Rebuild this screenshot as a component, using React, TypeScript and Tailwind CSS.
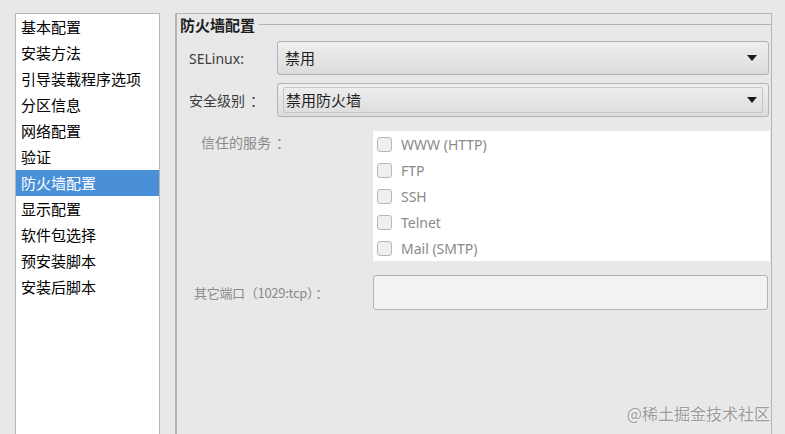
const navItems = [
  "基本配置",
  "安装方法",
  "引导装载程序选项",
  "分区信息",
  "网络配置",
  "验证",
  "防火墙配置",
  "显示配置",
  "软件包选择",
  "预安装脚本",
  "安装后脚本",
];

const services = ["WWW (HTTP)", "FTP", "SSH", "Telnet", "Mail (SMTP)"];

const cjk = "font-['Noto_Sans_CJK_SC','Noto_Sans',sans-serif]";
const latin = "font-['Noto_Sans','Noto_Sans_CJK_SC',sans-serif]";

function Arrow() {
  return (
    <svg width="10" height="6" viewBox="0 0 10 6" className="shrink-0">
      <path d="M0 0 H10 L5 6 Z" fill="#1a1a1a" />
    </svg>
  );
}

export default function App() {
  return (
    <div className={`relative w-[785px] h-[434px] overflow-hidden bg-[#e8e8e8] flex pt-[13px] ${cjk}`}>
      {/* sidebar */}
      <div className="ml-[15px] w-[145px] h-[440px] bg-white border border-[#b6b6b6]">
        {navItems.map((item) => (
          <div
            key={item}
            className={`h-[26px] flex items-center pl-[5px] pb-[1px] text-[15px] leading-none ${
              item === "防火墙配置" ? "bg-[#4a90d9] text-white" : "text-black"
            }`}
          >
            {item}
          </div>
        ))}
      </div>

      {/* firewall frame */}
      <div className="ml-[15px] w-[597px] h-[440px] border-t border-r border-l-2 border-[#b4b4b4] flex flex-col">
        <div className="h-[21px] flex items-center pl-[3px]">
          <span className="text-[15px] font-bold text-[#1e1e1e] leading-none pr-[4px]">防火墙配置</span>
          <div className="flex-1 h-px bg-[#b4b4b4]" />
        </div>

        <div className="mt-[6px] flex items-center h-[34px] pr-[2px]">
          <span className={`w-[100px] pl-[12px] text-[14px] text-[#3c3c3c] ${latin}`}>SELinux:</span>
          <div className="flex-1 h-full rounded-[3px] border border-[#b2b2b2] bg-gradient-to-b from-[#efefef] to-[#dcdcdc] flex items-center pl-[7px] pr-[11px]">
            <span className="flex-1 text-[15px] text-[#1e1e1e]">禁用</span>
            <Arrow />
          </div>
        </div>

        <div className="mt-[8px] flex items-center h-[34px] pr-[2px]">
          <span className="w-[100px] pl-[12px] text-[14px] text-[#3c3c3c]">
            安全级别<span className="ml-[5px]">：</span>
          </span>
          <div className="flex-1 h-full rounded-[3px] border border-[#b2b2b2] bg-gradient-to-b from-[#efefef] to-[#dcdcdc] py-[3px] pl-[5px] pr-[5px]">
            <div className="h-full border border-[#c6c6c6] rounded-[2px] flex items-center pl-[2px] pr-[5px]">
              <span className="flex-1 text-[15px] text-[#1e1e1e]">禁用防火墙</span>
              <Arrow />
            </div>
          </div>
        </div>

        <div className="mt-[14px] flex">
          <span className="w-[196px] pl-[24px] pt-[1px] text-[14px] text-[#8a8a8a] leading-[20px]">
            信任的服务<span className="ml-[5px]">：</span>
          </span>
          <div className="flex-1 bg-white h-[130px] mr-[1px]">
            {services.map((s) => (
              <div key={s} className="h-[26px] flex items-center pl-[4px]">
                <div className="w-[15px] h-[15px] rounded-[3px] border border-[#b8b8b8] bg-[#efefef]" />
                <span className={`ml-[9px] text-[14px] text-[#8a8a8a] ${latin}`}>{s}</span>
              </div>
            ))}
          </div>
        </div>

        <div className="mt-[14px] flex items-center h-[35px] pr-[3px]">
          <span className="w-[196px] pl-[17px] text-[13px] text-[#8a8a8a] tracking-[-0.3px]">
            其它端口（1029:tcp）<span className="ml-[2px]">：</span>
          </span>
          <div className="flex-1 h-full rounded-[3px] border border-[#b2b2b2] bg-[#f2f2f0]" />
        </div>
      </div>

      <span className="absolute right-[15px] top-[401px] text-[16px] text-[#9c9c9c] [text-shadow:0_0_2px_#fff]">
        @稀土掘金技术社区
      </span>
    </div>
  );
}
